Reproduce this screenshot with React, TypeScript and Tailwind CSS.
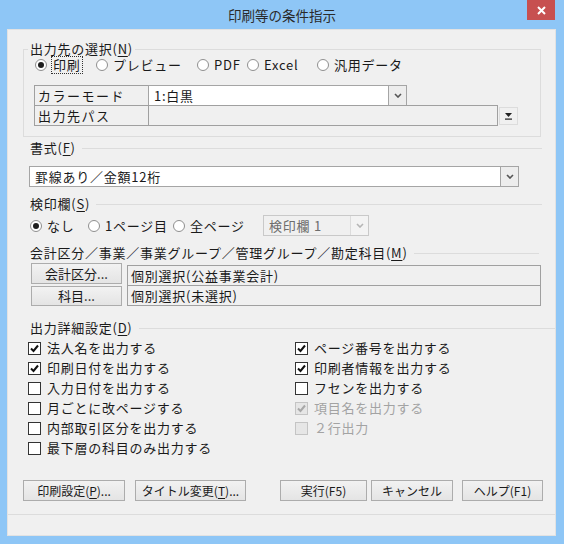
import type { ReactNode } from 'react'

// 印刷等の条件指示ダイアログ（Windows 8 風）

function Chevron({ disabled }: { disabled?: boolean }) {
  return (
    <svg width="8" height="5" viewBox="0 0 8 5">
      <polyline points="1,1 4,4 7,1" fill="none" stroke={disabled ? '#b5b5b5' : '#555'} strokeWidth="1.6" />
    </svg>
  )
}

function Combo({ text, className, disabled }: { text: string; className: string; disabled?: boolean }) {
  return (
    <div className={`flex h-[21px] border ${disabled ? 'border-[#c9c9c9] bg-[#f0f0f0] text-[#6d6d6d]' : 'border-[#a5a5a5] bg-white'} ${className}`}>
      <div className="flex-1 flex items-center pl-[5px] whitespace-nowrap overflow-hidden">{text}</div>
      <div className={`w-[18px] flex items-center justify-center border-l ${disabled ? 'border-[#dcdcdc] bg-[#f3f3f3]' : 'border-[#a5a5a5] bg-[#ededed]'}`}>
        <Chevron disabled={disabled} />
      </div>
    </div>
  )
}

function Radio({ label, checked, focus, className }: { label: ReactNode; checked?: boolean; focus?: boolean; className: string }) {
  return (
    <div className={`flex items-center whitespace-nowrap ${className}`}>
      <span className="w-[12px] h-[12px] rounded-full border border-[#8f8f8f] bg-white flex items-center justify-center shrink-0">
        {checked && <span className="w-[6px] h-[6px] rounded-full bg-[#1e1e1e]" />}
      </span>
      <span className={`ml-[5px] ${focus ? 'outline outline-1 outline-dotted outline-[#333] px-[1px]' : ''}`}>{label}</span>
    </div>
  )
}

function Check({ label, checked, disabled }: { label: string; checked?: boolean; disabled?: boolean }) {
  return (
    <div className={`flex items-center h-[20px] whitespace-nowrap ${disabled ? 'text-[#a3a3a3]' : ''}`}>
      <span className={`w-[13px] h-[13px] border flex items-center justify-center shrink-0 ${disabled ? 'border-[#c4c4c4] bg-[#e6e6e6]' : 'border-[#333] bg-white'}`}>
        {checked && (
          <svg width="11" height="11" viewBox="0 0 11 11">
            <polyline points="2,5.5 4.5,8 9,2.5" fill="none" stroke={disabled ? '#a8a8a8' : '#111'} strokeWidth="2" />
          </svg>
        )}
      </span>
      <span className="ml-[6px]">{label}</span>
    </div>
  )
}

function Header({ children, className }: { children: ReactNode; className: string }) {
  return (
    <div className={`flex items-center h-[16px] ${className}`}>
      <span className="whitespace-nowrap">{children}</span>
      <div className="flex-1 h-px bg-[#dcdcdc] ml-[6px]" />
    </div>
  )
}

function Btn({ children, className }: { children: ReactNode; className: string }) {
  return (
    <div className={`h-[21px] border border-[#acacac] bg-gradient-to-b from-[#f2f2f2] to-[#e4e4e4] text-[12px] tracking-normal flex items-center justify-center whitespace-nowrap ${className}`}>
      {children}
    </div>
  )
}

const LEFT_CHECKS = [
  { label: '法人名を出力する', checked: true },
  { label: '印刷日付を出力する', checked: true },
  { label: '入力日付を出力する' },
  { label: '月ごとに改ページする' },
  { label: '内部取引区分を出力する' },
  { label: '最下層の科目のみ出力する' },
]

const RIGHT_CHECKS = [
  { label: 'ページ番号を出力する', checked: true },
  { label: '印刷者情報を出力する', checked: true },
  { label: 'フセンを出力する' },
  { label: '項目名を出力する', checked: true, disabled: true },
  { label: '２行出力', disabled: true },
]

export default function App() {
  return (
    <div className="w-[564px] h-[544px] bg-[#8ec6f6] flex flex-col font-['Noto_Sans_CJK_JP',sans-serif] text-[13px] leading-[16px] tracking-[0.75px] text-[#1a1a1a]">
      {/* タイトルバー */}
      <div className="h-[29px] shrink-0 grid grid-cols-[1fr_auto_1fr] items-start">
        <div />
        <div className="pt-[7px] text-[13.5px] tracking-normal text-[#2a2a2a]">印刷等の条件指示</div>
        <div className="justify-self-end mr-[9px] w-[28px] h-[20px] bg-[#c75050] flex items-center justify-center">
          <svg width="9" height="9" viewBox="0 0 9 9">
            <path d="M1 1 L8 8 M8 1 L1 8" stroke="#fff" strokeWidth="2" />
          </svg>
        </div>
      </div>

      {/* クライアント領域 */}
      <div className="ml-[7px] w-[549px] h-[507px] border border-[#e2e2e2] bg-[#f0f0f0] flex flex-col">
        <fieldset className="ml-[15px] mt-[12px] w-[518px] border border-[#dcdcdc] pb-[10px]">
          <legend className="ml-[4px] px-[2px] h-[14px] leading-[14px]">出力先の選択(<u className="underline-offset-2">N</u>)</legend>
          <div className="flex h-[16px] mt-[1px] ml-[11px]">
            <Radio className="w-[61px]" label="印刷" checked focus />
            <Radio className="w-[101px]" label="プレビュー" />
            <Radio className="w-[50px]" label="PDF" />
            <Radio className="w-[70px]" label="Excel" />
            <Radio className="w-[100px]" label="汎用データ" />
          </div>
          <div className="flex mt-[12px] ml-[10px]">
            <div className="w-[115px] h-[41px] border border-[#a0a0a0] flex flex-col tracking-[1.5px]">
              <div className="h-[20px] border-b border-[#a0a0a0] flex items-center pl-[3px]">カラーモード</div>
              <div className="h-[19px] flex items-center pl-[3px]">出力先パス</div>
            </div>
            <div className="-ml-px flex flex-col">
              <Combo className="w-[259px]" text="1:白黒" />
              <div className="-mt-px flex">
                <div className="w-[350px] h-[21px] border border-[#a0a0a0] bg-[#f0f0f0]" />
                <div className="ml-[1px] mt-[2px] w-[19px] h-[18px] border border-[#dcdcdc] flex items-center justify-center">
                  <svg width="7" height="7" viewBox="0 0 7 7">
                    <polygon points="0,0 7,0 3.5,4" fill="#222" />
                    <rect x="0" y="5.5" width="7" height="1.2" fill="#222" />
                  </svg>
                </div>
              </div>
            </div>
          </div>
        </fieldset>

        <Header className="mt-[3px] ml-[22px] mr-[13px]">書式(<u className="underline-offset-2">F</u>)</Header>
        <Combo className="mt-[10px] ml-[21px] w-[490px]" text="罫線あり／金額12桁" />

        <Header className="mt-[9px] ml-[22px] mr-[13px]">検印欄(<u className="underline-offset-2">S</u>)</Header>
        <div className="mt-[3px] ml-[22px] flex items-center h-[21px]">
          <Radio className="w-[58px]" label="なし" checked />
          <Radio className="w-[85px]" label="1ページ目" />
          <Radio className="w-[90px]" label="全ページ" />
          <Combo className="w-[106px]" text="検印欄 1" disabled />
        </div>

        <Header className="mt-[9px] ml-[22px] mr-[16px]">会計区分／事業／事業グループ／管理グループ／勘定科目(<u className="underline-offset-2">M</u>)</Header>
        <div className="mt-[2px] ml-[23px] flex">
          <div className="flex flex-col w-[91px] tracking-[1px]">
            <Btn className="w-[91px] !h-[21px] text-[13px]">会計区分...</Btn>
            <Btn className="mt-[2px] w-[91px] !h-[20px] text-[13px]">科目...</Btn>
          </div>
          <div className="ml-[5px] mt-[2px] w-[414px] h-[41px] border border-[#a0a0a0] flex flex-col">
            <div className="h-[20px] border-b border-[#a0a0a0] flex items-center pl-[3px]">個別選択(公益事業会計)</div>
            <div className="h-[19px] flex items-center pl-[3px]">個別選択(未選択)</div>
          </div>
        </div>

        <Header className="mt-[14px] ml-[22px]">出力詳細設定(<u className="underline-offset-2">D</u>)</Header>
        <div className="mt-[2px] ml-[20px] grid grid-cols-[267px_1fr]">
          <div className="flex flex-col">
            {LEFT_CHECKS.map((c) => (
              <Check key={c.label} label={c.label} checked={c.checked} />
            ))}
          </div>
          <div className="flex flex-col">
            {RIGHT_CHECKS.map((c) => (
              <Check key={c.label} label={c.label} checked={c.checked} disabled={c.disabled} />
            ))}
          </div>
        </div>

        <div className="mt-[22px] ml-[15px] flex">
          <Btn className="w-[102px]">印刷設定(<u className="underline-offset-2">P</u>)...</Btn>
          <Btn className="ml-[10px] w-[111px]">タイトル変更(<u className="underline-offset-2">T</u>)...</Btn>
          <Btn className="ml-[34px] w-[87px]">実行(F5)</Btn>
          <Btn className="ml-[4px] w-[82px]">キャンセル</Btn>
          <Btn className="ml-[9px] w-[81px]">ヘルプ(F1)</Btn>
        </div>

        <div className="mt-[13px] h-px bg-[#dcdcdc]" />
        <div className="flex-1" />
      </div>
    </div>
  )
}
